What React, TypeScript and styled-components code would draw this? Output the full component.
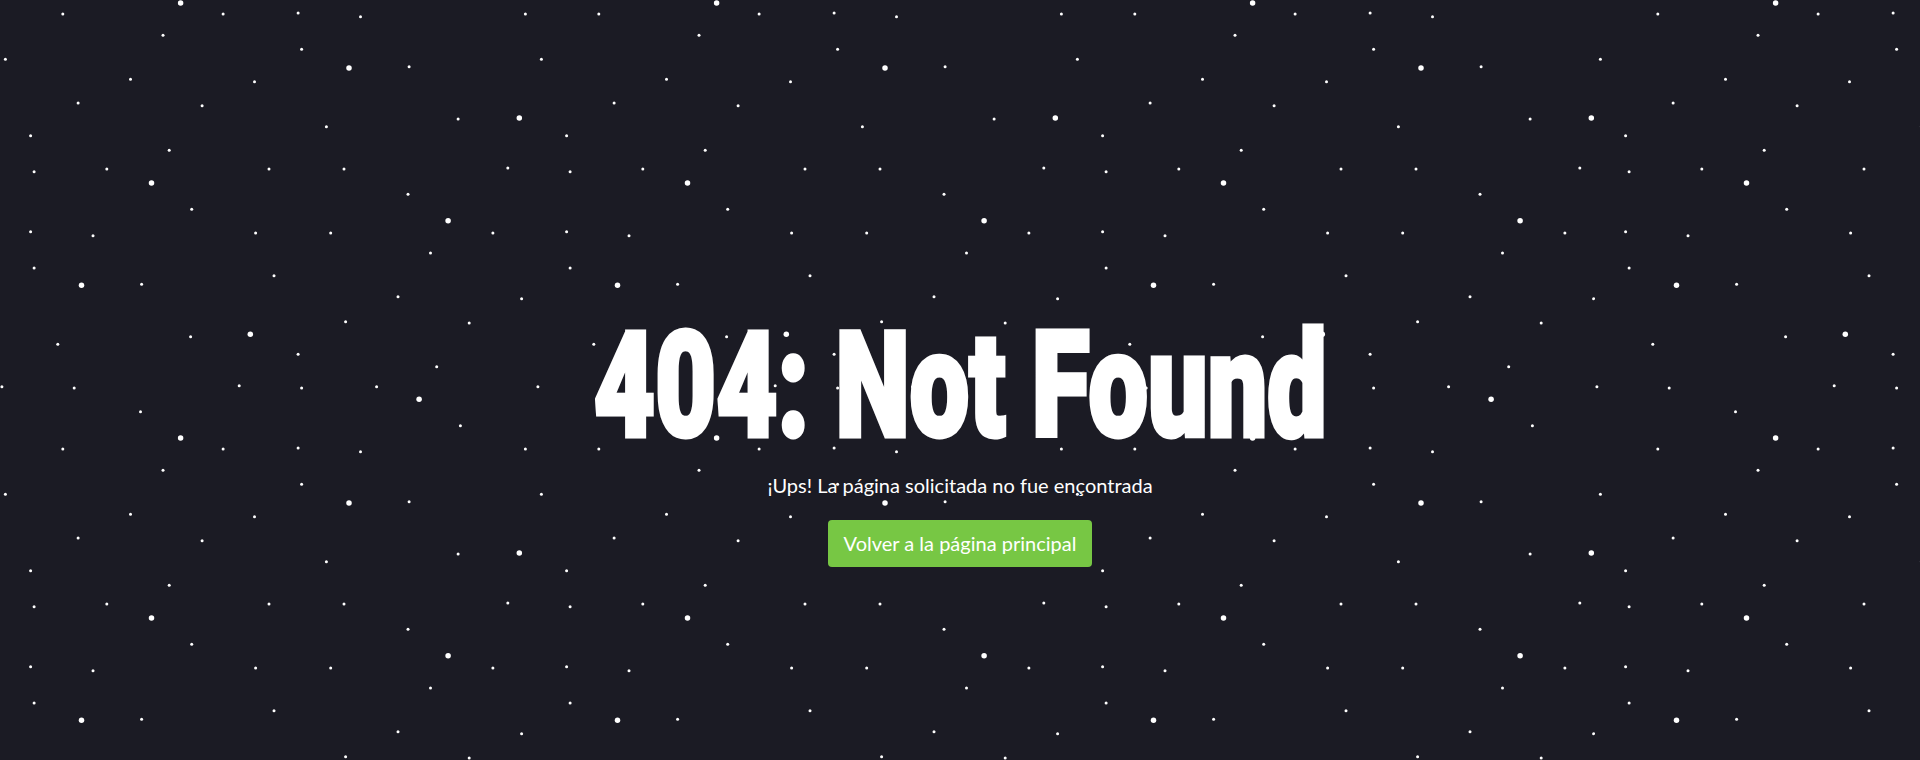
import { useLayoutEffect, useRef, useState } from 'react'
import styled, { createGlobalStyle } from 'styled-components'

// star field: one 536x435 tile, three copies then a fourth that restarts at 1595
const TILE_H = 435
const TILE_X = [0, 536, 1072]
const LAST_X = 1595

// [x, y, big]
const STARS: [number, number, number][] = [
  [180.6, 3, 1], [62.8, 14, 0], [223.1, 14, 0], [298.1, 13, 0], [360.5, 16.7, 0], [525.4, 14, 0],
  [163, 35.3, 0], [301.6, 49.3, 0], [5.4, 59.3, 0], [349, 68, 1], [409.1, 66.7, 0],
  [130.5, 79.3, 0], [254.5, 81.7, 0], [78.1, 103, 0], [202.1, 105.7, 0], [326.4, 126.7, 0],
  [458.1, 119, 0], [519.3, 118, 1], [30.6, 135.7, 0], [169.2, 150.3, 0], [34.1, 171.7, 0],
  [106.8, 169, 0], [269, 169, 0], [344, 169, 0], [507.8, 168, 0], [151.5, 183, 1],
  [408, 194.3, 0], [191.7, 209.3, 0], [448.1, 220.7, 1], [30.6, 231.7, 0], [93, 235.7, 0],
  [255.6, 233, 0], [330.7, 233, 0], [492.9, 233, 0], [430.5, 253, 0], [34.1, 268, 0],
  [274, 275.7, 0], [81.5, 285.3, 1], [141.6, 284.3, 0], [398, 296.7, 0], [521.6, 298.7, 0],
  [57.8, 344.3, 0], [190.6, 336.7, 0], [250.3, 334.3, 1], [345.6, 321.7, 0], [469.2, 323, 0],
  [298.1, 354.3, 0], [436.7, 366.7, 0], [1.9, 386.7, 0], [74.2, 388, 0], [239.2, 385.7, 0],
  [301.6, 388, 0], [376.6, 386.7, 0], [419.1, 399.3, 1], [140.5, 411.7, 0], [460.4, 425.7, 0],
]

const GlobalStyle = createGlobalStyle`
  html, body { margin: 0; padding: 0; background: #1b1b24; }
  body { font-family: Lato, "Open Sans", sans-serif; -webkit-font-smoothing: antialiased; }
`

const Page = styled.main`
  display: grid;
  min-height: 100vh;
  overflow: hidden;
  background: #1b1b24;
  & > * { grid-area: 1 / 1; }
`
const Sky = styled.svg`
  display: block;
  width: 100%;
  height: 100%;
  pointer-events: none;
`
const Content = styled.section`
  display: flex;
  flex-direction: column;
  align-items: center;
  justify-content: center;
  padding-top: 120px;
`
const Title = styled.h1`
  margin: 0;
  font-family: Roboto, "Liberation Sans", sans-serif;
  font-weight: 900;
  font-size: 146px;
  line-height: 1;
  color: #fff;
  -webkit-text-stroke: 5px #fff;
  white-space: nowrap;
  transform-origin: center;
`
const Lead = styled.p`
  margin: 13px 0 0;
  font-family: Lato, "Open Sans", sans-serif;
  font-size: 20px;
  line-height: 1.2;
  color: #fff;
`
const HomeButton = styled.a`
  display: inline-block;
  margin-top: 23px;
  padding: 12px 16px;
  background: #77c744;
  color: #fff;
  border-radius: 4px;
  font-family: Lato, "Open Sans", sans-serif;
  font-size: 20px;
  line-height: 23px;
  text-decoration: none;
  cursor: pointer;
`

function StarTile({ x, y }: { x: number; y: number }) {
  return <use href="#star-tile" x={x} y={y} />
}

export default function App() {
  const titleRef = useRef<HTMLHeadingElement>(null)
  const [sx, setSx] = useState(1)

  // squeeze the title to the condensed width of the original face
  useLayoutEffect(() => {
    const el = titleRef.current
    if (!el) return
    const w = el.getBoundingClientRect().width
    if (w > 0) setSx(733 / w)
  }, [])

  const rows = [0, TILE_H]

  return (
    <>
      <GlobalStyle />
      <Page>
        <Sky xmlns="http://www.w3.org/2000/svg" aria-hidden="true">
          <defs>
            <g id="star-tile">
              {STARS.map(([cx, cy, big], i) => (
                <circle key={i} cx={cx} cy={cy} r={big ? 2.75 : 1.5} fill="#fff" />
              ))}
            </g>
            <clipPath id="first-run">
              <rect x="0" y="0" width={LAST_X} height="2000" />
            </clipPath>
          </defs>
          <g clipPath="url(#first-run)">
            {TILE_X.map(tx => rows.map(ty => <StarTile key={`${tx}-${ty}`} x={tx} y={ty} />))}
          </g>
          {rows.map(ty => <StarTile key={`last-${ty}`} x={LAST_X} y={ty} />)}
        </Sky>
        <Content>
          <Title ref={titleRef} style={{ transform: `scaleX(${sx})` }}>404: Not Found</Title>
          <Lead>¡Ups! La página solicitada no fue ençontrada</Lead>
          <HomeButton href="#">Volver a la página principal</HomeButton>
        </Content>
      </Page>
    </>
  )
}
